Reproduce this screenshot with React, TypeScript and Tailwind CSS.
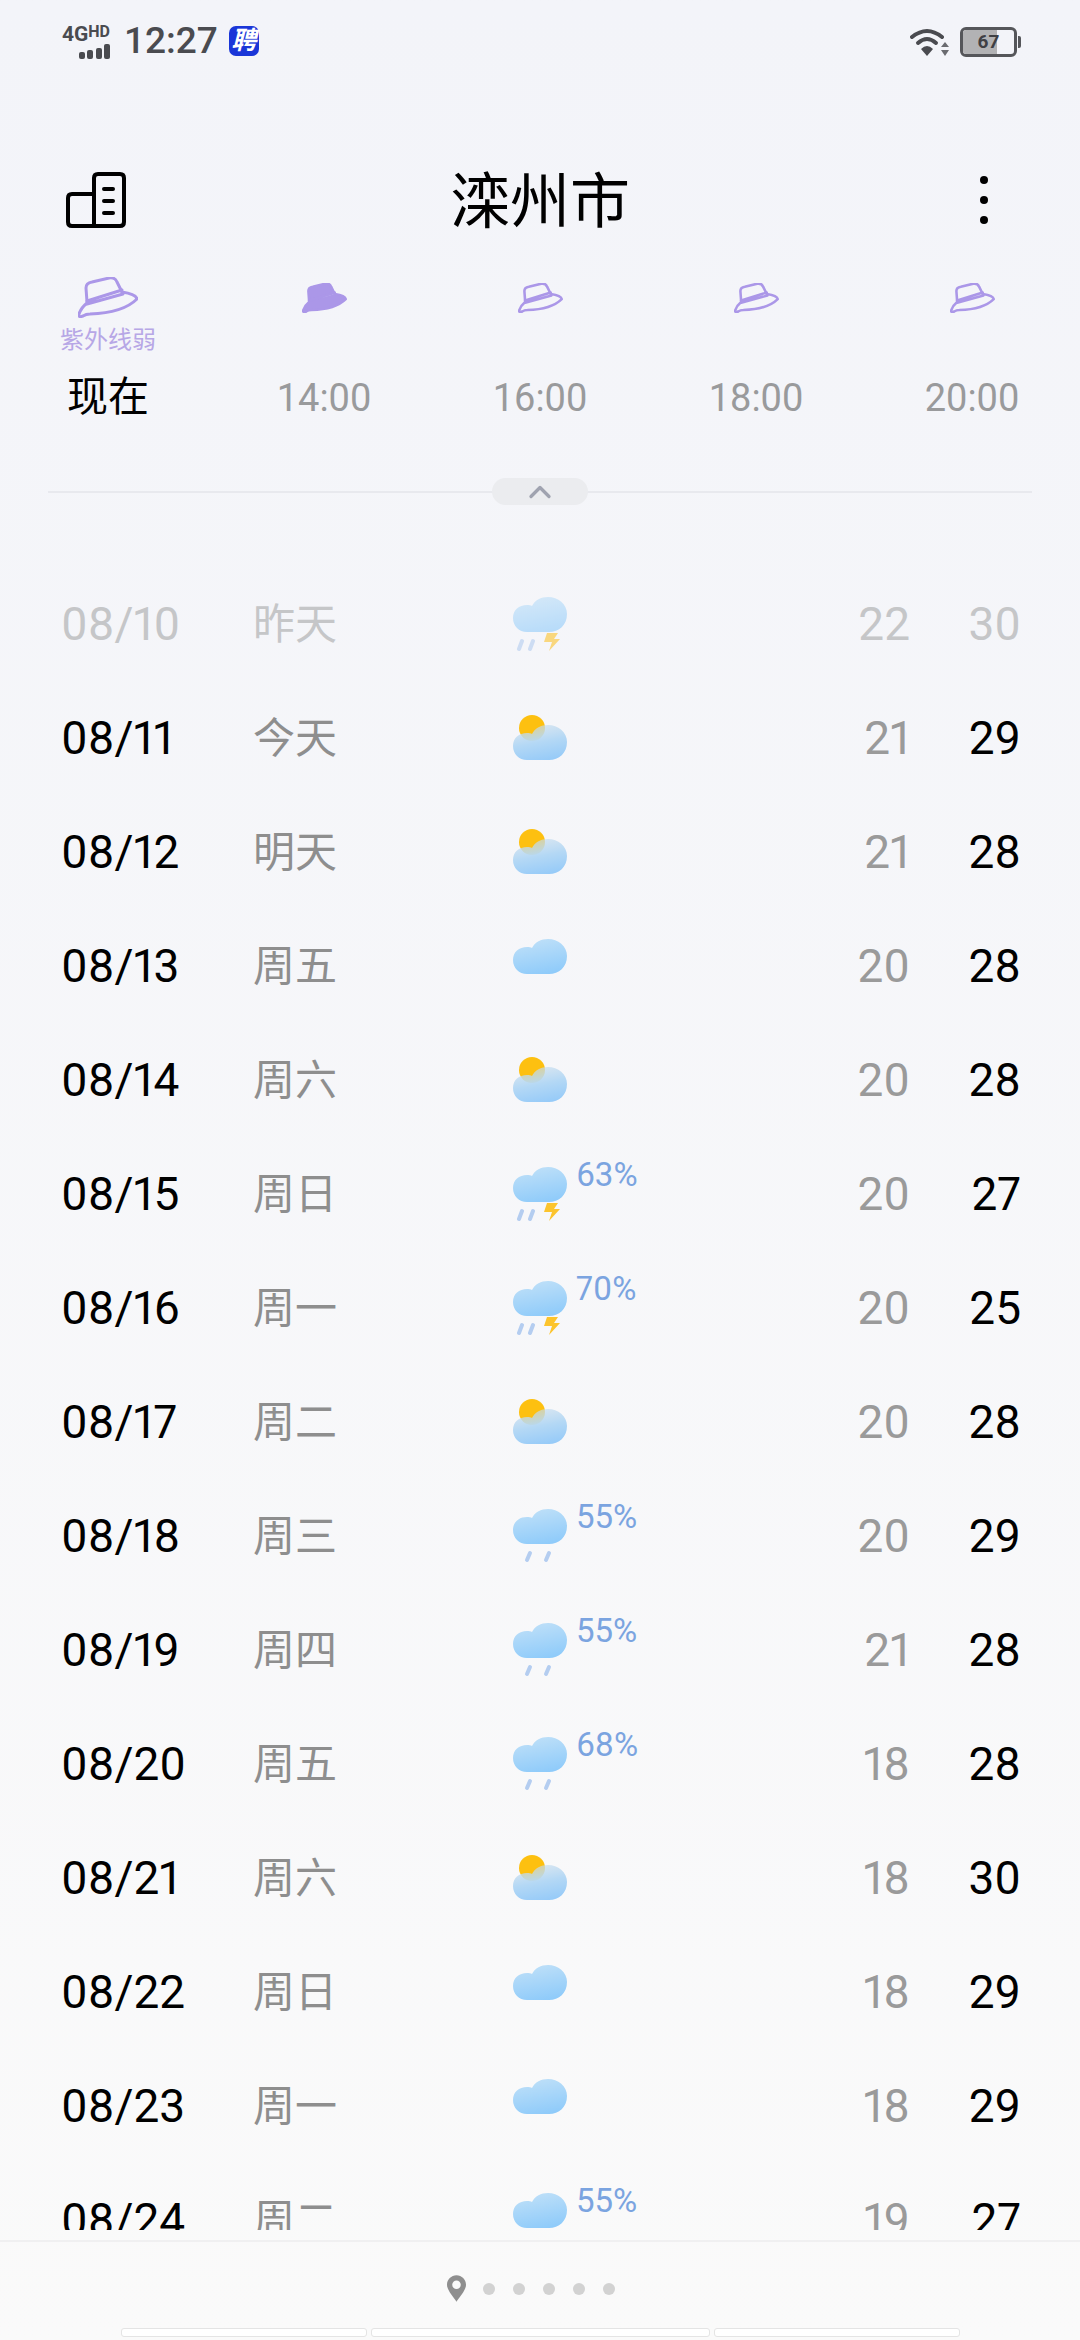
import { ChevronUp } from "lucide-react";

type Kind = "sun" | "cloud" | "rain" | "thunder";

interface Day {
  date: string;
  week: string;
  kind: Kind;
  pct?: string;
  low: number;
  high: number;
}

const days: Day[] = [
  { date: "08/10", week: "昨天", kind: "thunder", low: 22, high: 30 },
  { date: "08/11", week: "今天", kind: "sun", low: 21, high: 29 },
  { date: "08/12", week: "明天", kind: "sun", low: 21, high: 28 },
  { date: "08/13", week: "周五", kind: "cloud", low: 20, high: 28 },
  { date: "08/14", week: "周六", kind: "sun", low: 20, high: 28 },
  { date: "08/15", week: "周日", kind: "thunder", pct: "63%", low: 20, high: 27 },
  { date: "08/16", week: "周一", kind: "thunder", pct: "70%", low: 20, high: 25 },
  { date: "08/17", week: "周二", kind: "sun", low: 20, high: 28 },
  { date: "08/18", week: "周三", kind: "rain", pct: "55%", low: 20, high: 29 },
  { date: "08/19", week: "周四", kind: "rain", pct: "55%", low: 21, high: 28 },
  { date: "08/20", week: "周五", kind: "rain", pct: "68%", low: 18, high: 28 },
  { date: "08/21", week: "周六", kind: "sun", low: 18, high: 30 },
  { date: "08/22", week: "周日", kind: "cloud", low: 18, high: 29 },
  { date: "08/23", week: "周一", kind: "cloud", low: 18, high: 29 },
  { date: "08/24", week: "周二", kind: "rain", pct: "55%", low: 19, high: 27 },
];

const hours = [
  { label: "现在", now: true, big: true },
  { label: "14:00", filled: true },
  { label: "16:00" },
  { label: "18:00" },
  { label: "20:00" },
];

const cloudPath =
  "M14 35C6 35 0 29 0 21C0 13 6 8 14 8C16 8 18 8 19 9C22 3 28 0 35 0C45 0 54 7 54 17C54 28 46 35 36 35Z";

function WeatherIcon({ kind }: { kind: Kind }) {
  return (
    <svg viewBox="0 0 54 54" className="w-[54px] h-[54px]">
      <defs>
        <linearGradient id="cloudFill" x1="0.3" y1="0" x2="0.6" y2="1">
          <stop offset="0" stopColor="#bfe0f8" />
          <stop offset="1" stopColor="#8fcbfa" />
        </linearGradient>
        <linearGradient id="sunCloudFill" x1="0.3" y1="0" x2="0.6" y2="1">
          <stop offset="0" stopColor="#c6dced" stopOpacity="0.6" />
          <stop offset="0.5" stopColor="#b4d8f5" />
          <stop offset="1" stopColor="#97cbf8" />
        </linearGradient>
      </defs>
      {kind === "sun" && <circle cx="19" cy="17" r="13" fill="#fdc010" />}
      <path d={cloudPath} fill={kind === "sun" ? "url(#sunCloudFill)" : "url(#cloudFill)"} transform={kind === "sun" ? "translate(0 14)" : undefined} />
      {kind === "thunder" && (
        <>
          <path d="M9 44L6 52M20 44L17 52" stroke="#b4cdf0" strokeWidth="4" strokeLinecap="round" />
          <path d="M34 36H45L41 42H47L36 54L39 45H31Z" fill="#fcc42d" />
        </>
      )}
      {kind === "rain" && (
        <>
          <path d="M17 44L14 51M36 44L33 51" stroke="#b4cdf0" strokeWidth="4" strokeLinecap="round" />
        </>
      )}
    </svg>
  );
}

function Hat({ big, filled }: { big?: boolean; filled?: boolean }) {
  return (
    <svg viewBox="0 0 60 41" className={big ? "w-[60px] h-[41px]" : "w-[45px] h-[30px]"} fill="none" stroke="#ab97e8" strokeWidth={big ? 3 : 3.5} strokeLinejoin="round" strokeLinecap="round">
      <path d="M9 25L8 11Q8 6 14 5L31 1Q37 0 39 5L44 15" fill={filled ? "#ab97e8" : "none"} />
      <path d="M9 24L44 13M9 27L45 17" />
      <path d="M9 26Q3 31 1 37Q0 41 5 39Q8 37 12 37Q45 36 59 22Q58 17 44 15" fill={filled ? "#ab97e8" : "none"} />
    </svg>
  );
}

export default function App() {
  return (
    <div
      className="w-[1080px] h-[2340px] overflow-hidden flex flex-col bg-gradient-to-b from-[#f3f4f9] to-[#fafafa] text-black"
      style={{ fontFamily: 'Roboto, "Noto Sans CJK SC", sans-serif' }}
    >
      {/* Status bar */}
      <div className="h-[158px] pt-[25px] flex justify-between items-start pl-[63px] pr-[59px] text-[#4a4b50]">
        <div className="flex items-center">
          <div className="w-[47px] h-[32px] flex flex-col items-end">
            <div className="font-bold text-[21px] leading-[18px] whitespace-nowrap">
              4G<span className="text-[16px] align-top leading-[14px]">HD</span>
            </div>
            <div className="flex items-end gap-[2.5px] mt-[1px]">
              <span className="w-[6px] h-[7px] rounded-[2px] bg-[#4a4b50]" />
              <span className="w-[6px] h-[9px] rounded-[2px] bg-[#4a4b50]" />
              <span className="w-[6px] h-[11px] rounded-[2px] bg-[#4a4b50]" />
              <span className="w-[6px] h-[15px] rounded-[2px] bg-[#4a4b50]" />
            </div>
          </div>
          <span className="ml-[14px] text-[37px] leading-[32px] font-medium">12:27</span>
          <span className="ml-[11px] w-[30px] h-[30px] rounded-[7px] bg-[#1a36d8] text-white text-[25px] leading-[30px] font-bold text-center italic">聘</span>
        </div>
        <div className="flex items-center mt-[2px]">
          <svg viewBox="0 0 40 30" className="w-[40px] h-[30px]" fill="none">
            <path d="M2 10Q17 -2 32 10" stroke="#4a4b50" strokeWidth="4" strokeLinecap="round" />
            <path d="M8 16Q17 8 26 16" stroke="#4a4b50" strokeWidth="4" strokeLinecap="round" />
            <path d="M11 22Q17 16 23 22L17 29Z" fill="#4a4b50" />
            <path d="M35 15L39 20H31ZM35 29L39 23H31Z" fill="#6a6b70" />
          </svg>
          <div className="relative ml-[10px] w-[57px] h-[30px] rounded-[6px] border-[3px] border-[#55565a] overflow-hidden">
            <div className="absolute inset-y-0 left-0 w-[34px] bg-[#b2b2b4]" />
            <span className="absolute inset-0 text-center text-[#3f4044] text-[19px] leading-[24px] font-bold">67</span>
          </div>
          <span className="ml-[1px] w-[3px] h-[12px] rounded-r-[2px] bg-[#55565a]" />
        </div>
      </div>

      {/* Header */}
      <div className="h-[84px] flex items-center justify-between pl-[66px] pr-[92px] relative">
        <svg viewBox="0 0 60 56" className="w-[60px] h-[56px]" fill="none" stroke="#000" strokeWidth="4" strokeLinejoin="round" strokeLinecap="round">
          <path d="M28 54V6Q28 2 32 2H54Q58 2 58 6V50Q58 54 54 54H6Q2 54 2 50V26Q2 22 6 22H28" />
          <path d="M38 17H47M38 29H47M38 41H47" />
        </svg>
        <h1 className="absolute inset-x-0 pt-[5px] text-center text-[60px] leading-[84px] font-normal">滦州市</h1>
        <div className="flex flex-col gap-[12px]">
          <span className="w-[8px] h-[8px] rounded-full bg-black" />
          <span className="w-[8px] h-[8px] rounded-full bg-black" />
          <span className="w-[8px] h-[8px] rounded-full bg-black" />
        </div>
      </div>

      {/* UV / hours strip */}
      <div className="mt-[35px] grid grid-cols-[216px_216px_216px_216px_216px]">
        {hours.map((h) => (
          <div key={h.label} className="flex flex-col items-center">
            <div className="h-[41px] flex items-center justify-center">
              <Hat big={h.big} filled={h.filled} />
            </div>
            <div className="h-[34px] pt-[10px] text-[24px] leading-[24px] text-[#b7a7e6]">{h.big ? "紫外线弱" : ""}</div>
            <div className={h.now ? "mt-[23px] text-[41px] leading-[44px]" : "mt-[24px] text-[38px] leading-[44px] text-[#999a9c]"}>{h.label}</div>
          </div>
        ))}
      </div>

      {/* Divider with collapse handle */}
      <div className="relative mt-[71px] mx-[48px] h-[2px] bg-[#e8e9ee]">
        <div className="absolute left-[444px] -top-[13px] w-[96px] h-[27px] rounded-full bg-[#ebecef] flex items-center justify-center">
          <ChevronUp size={36} strokeWidth={2.2} className="text-[#a0a3b0]" />
        </div>
      </div>

      {/* Daily list */}
      <div className="mt-[74px] h-[1663px] overflow-hidden">
        {days.map((d, i) => {
          const past = i === 0;
          return (
            <div key={d.date} className="h-[114px] flex items-center pl-[61px] pr-[59px] proportional-nums">
              <div className={past ? "w-[192px] text-[46px] text-[#c5c6c8]" : "w-[192px] text-[46px]"}>{d.date}</div>
              <div className={past ? "w-[260px] text-[42px] text-[#c5c6c8]" : "w-[260px] text-[42px] text-[#8e8e8e]"}>{d.week}</div>
              <div className="relative w-[54px] h-[54px]">
                <div className={past ? "opacity-60" : ""}>
                  <WeatherIcon kind={d.kind} />
                </div>
                {d.pct && <span className="absolute left-[63px] -top-[8px] text-[33px] leading-[32px] text-[#7ba4e0]">{d.pct}</span>}
              </div>
              <div className={past ? "flex-1 text-right text-[46px] text-[#c5c6c8]" : "flex-1 text-right text-[46px] text-[#9a9a9a]"}>{d.low}</div>
              <div className={past ? "w-[111px] text-right text-[46px] text-[#c5c6c8]" : "w-[111px] text-right text-[46px]"}>{d.high}</div>
            </div>
          );
        })}
      </div>

      {/* Footer */}
      <div className="mt-[10px] border-t-2 border-[#f0f0f1] flex-1 flex flex-col items-center">
        <div className="mt-[33px] mr-[18px] flex items-center">
          <svg viewBox="0 0 20 28" className="w-[19px] h-[27px]">
            <path fillRule="evenodd" d="M10 0C4.5 0 0 4.5 0 10C0 16 7 23 10 28C13 23 20 16 20 10C20 4.5 15.5 0 10 0ZM10 5.5A4.5 4.5 0 1 1 10 14.5A4.5 4.5 0 1 1 10 5.5Z" fill="#8f8f8f" />
          </svg>
          <div className="ml-[17px] flex gap-[18px]">
            {[0, 1, 2, 3, 4].map((n) => (
              <span key={n} className="w-[12px] h-[12px] rounded-full bg-[#d2d2d2]" />
            ))}
          </div>
        </div>
        <div className="mt-[26px] flex gap-[4px]">
          <div className="w-[246px] h-[9px] rounded-[3px] bg-white border border-[#e4e4e4]" />
          <div className="w-[339px] h-[9px] rounded-[3px] bg-white border border-[#e4e4e4]" />
          <div className="w-[246px] h-[9px] rounded-[3px] bg-white border border-[#e4e4e4]" />
        </div>
      </div>
    </div>
  );
}
